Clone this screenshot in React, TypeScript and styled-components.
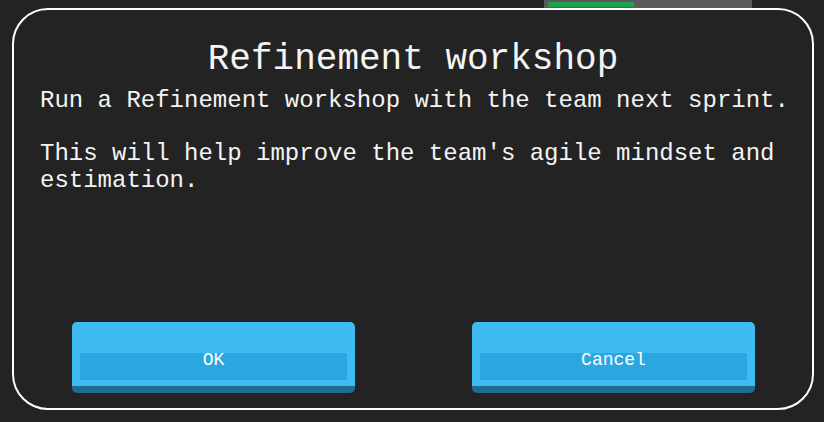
import React from "react";
import styled, { createGlobalStyle } from "styled-components";

// Refinement workshop dialog shown over the sprint board

const GlobalStyle = createGlobalStyle`
  html, body {
    margin: 0;
    padding: 0;
    background: #232323;
  }
  * {
    box-sizing: border-box;
  }
`;

const Page = styled.div`
  position: relative;
  width: 824px;
  height: 422px;
  overflow: hidden;
  background: #232323;
  font-family: "Liberation Mono", "DejaVu Sans Mono", monospace;
  color: #f4f4f4;
`;

const Board = styled.div`
  display: flex;
  justify-content: flex-end;
  padding: 0 72px 0 0;
`;

const ProgressTrack = styled.div`
  width: 208px;
  height: 12px;
  background: #5a5a5a;
  padding: 2px 4px;
`;

const ProgressFill = styled.div`
  height: 5px;
  background: #22a04c;
`;

const Overlay = styled.div`
  position: absolute;
  inset: 0;
  padding: 8px 10px 12px 12px;
  display: flex;
`;

const Dialog = styled.div`
  flex: 1;
  display: flex;
  flex-direction: column;
  border: 2px solid #ffffff;
  border-radius: 36px;
  background: #232323;
  padding: 28px 20px 15px 26px;
`;

const Title = styled.h1`
  margin: 0;
  font-size: 36px;
  line-height: 44px;
  font-weight: 400;
  text-align: center;
  padding-right: 6px;
`;

const Body = styled.div`
  margin-top: 5px;
  display: flex;
  flex-direction: column;
  gap: 26px;
`;

const Paragraph = styled.p`
  margin: 0;
  font-size: 24px;
  line-height: 27px;
  font-weight: 400;
`;

const Actions = styled.div`
  margin-top: auto;
  display: flex;
  justify-content: space-between;
  padding: 0 37px 0 32px;
`;

const Button = styled.button`
  width: 283px;
  height: 71px;
  border: none;
  border-bottom: 7px solid #1e6d8f;
  border-radius: 5px;
  background:
    linear-gradient(#2aa7e0, #2aa7e0) 8px 31px / calc(100% - 16px) 27px no-repeat,
    #3ebbf0;
  display: flex;
  justify-content: center;
  align-items: flex-start;
  padding: 29px 0 0;
  font-family: "Liberation Mono", "DejaVu Sans Mono", monospace;
  font-size: 18px;
  line-height: 18px;
  font-weight: 400;
  color: #ffffff;
  cursor: pointer;
`;

const App: React.FC = () => {
  const progress = 43;

  return (
    <>
      <GlobalStyle />
      <Page>
        <Board>
          <ProgressTrack>
            <ProgressFill style={{ width: `${progress}%` }} />
          </ProgressTrack>
        </Board>
        <Overlay>
          <Dialog>
            <Title>Refinement workshop</Title>
            <Body>
              <Paragraph>Run a Refinement workshop with the team next sprint.</Paragraph>
              <Paragraph>This will help improve the team's agile mindset and estimation.</Paragraph>
            </Body>
            <Actions>
              <Button>OK</Button>
              <Button>Cancel</Button>
            </Actions>
          </Dialog>
        </Overlay>
      </Page>
    </>
  );
};

export default App;
